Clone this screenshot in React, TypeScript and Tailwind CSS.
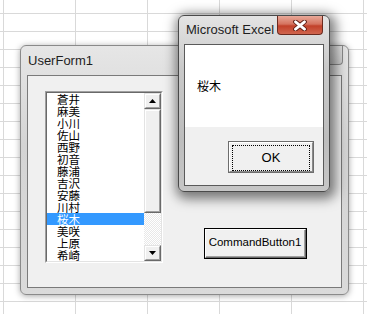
import React from 'react';

const names = ['蒼井', '麻美', '小川', '佐山', '西野', '初音', '藤浦', '吉沢', '安藤', '川村', '桜木', '美咲', '上原', '希崎'];

const sans = 'font-["Liberation_Sans",Arial,sans-serif]';
const cjk = 'font-["Noto_Sans_CJK_JP","Noto_Sans_CJK_SC",sans-serif]';

function Arrow({ down }: { down?: boolean }) {
  return (
    <svg width="7" height="4" viewBox="0 0 7 4">
      <polygon points={down ? '0,0 7,0 3.5,4' : '3.5,0 7,4 0,4'} fill="#000" />
    </svg>
  );
}

function ScrollBtn({ down }: { down?: boolean }) {
  return (
    <div className="h-[16px] border border-t-[#e3e3e3] border-l-[#e3e3e3] border-r-[#696969] border-b-[#696969]">
      <div className="h-full flex items-center justify-center bg-[#f0f0f0] border border-t-white border-l-white border-r-[#a0a0a0] border-b-[#a0a0a0]">
        <Arrow down={down} />
      </div>
    </div>
  );
}

function ListBox() {
  return (
    <div className="w-[118px] h-[172px] border border-t-[#a0a0a0] border-l-[#a0a0a0] border-r-white border-b-white">
      <div className="h-full flex bg-white border border-t-[#696969] border-l-[#696969] border-r-[#e3e3e3] border-b-[#e3e3e3]">
        <div className={`flex-1 flex flex-col ${cjk} text-[11.5px] leading-[12px] text-black`}>
          {names.map((n) => (
            <div
              key={n}
              className={`h-[12px] flex items-center pl-[10px] ${n === '桜木' ? 'bg-[#3399ff] text-white' : ''}`}
            >
              <span className="leading-[11px]">{n}</span>
            </div>
          ))}
        </div>
        <div className="w-[17px] flex flex-col">
          <ScrollBtn />
          <div className="h-[104px] border border-t-[#e3e3e3] border-l-[#e3e3e3] border-r-[#696969] border-b-[#696969]">
            <div className="h-full bg-[#f0f0f0] border border-t-white border-l-white border-r-[#a0a0a0] border-b-[#a0a0a0]" />
          </div>
          <div className="flex-1 bg-[repeating-conic-gradient(#ffffff_0_25%,#e8e8e8_0_50%)] bg-[length:2px_2px]" />
          <ScrollBtn down />
        </div>
      </div>
    </div>
  );
}

function CloseX() {
  return (
    <svg width="14" height="11" viewBox="0 0 14 11">
      <path d="M2.5 1.8 L11.5 9.2 M11.5 1.8 L2.5 9.2" stroke="#5a1a10" strokeWidth="4.6" strokeLinecap="round" />
      <path d="M2.5 1.8 L11.5 9.2 M11.5 1.8 L2.5 9.2" stroke="#ffffff" strokeWidth="2.8" strokeLinecap="round" />
    </svg>
  );
}

export default function App() {
  return (
    <div className="relative w-[367px] h-[314px] overflow-hidden bg-white bg-[linear-gradient(to_right,#d9d9d9_1px,transparent_1px),linear-gradient(to_bottom,#d9d9d9_1px,transparent_1px)] bg-[length:72px_18px] bg-[position:3px_13px]">
      {/* UserForm1 */}
      <div className="absolute left-[20px] top-[45px] w-[329px] h-[250px] flex flex-col rounded-[6px] border border-[#8a8a8a] bg-[linear-gradient(to_bottom,#e6e6e6,#d4d4d4_40%,#dadada)] shadow-[0_1px_6px_rgba(0,0,0,0.35)]">
        <div className={`h-[29px] pl-[7px] flex items-center ${sans} text-[13px] text-[#1e1e1e]`}>UserForm1</div>
        <div className="absolute right-[5px] top-0 w-[44px] h-[19px] rounded-b-[4px] border border-t-0 border-[#8a8a8a] bg-[linear-gradient(to_bottom,#e4e4e4,#cfcfcf)]" />
        <div className="flex-1 mx-[6px] mb-[6px] border border-[#7a7a7a] bg-[#f0f0f0] flex items-start pl-[17px] pt-[15px]">
          <ListBox />
          <div className="ml-[41px] mt-[137px] w-[103px] h-[31px] border border-black">
            <div className="h-full border border-t-white border-l-white border-r-[#696969] border-b-[#696969]">
              <div className={`h-full flex items-center justify-center bg-[#f0f0f0] border-r border-b border-[#a0a0a0] ${sans} text-[11.5px] text-black`}>
                CommandButton1
              </div>
            </div>
          </div>
        </div>
      </div>

      {/* MsgBox */}
      <div className="absolute left-[178px] top-[15px] w-[152px] h-[177px] flex flex-col rounded-[6px] border border-[#4a4a4a] bg-[linear-gradient(to_bottom,#e4e4e4,#c9c9c9_30%,#bdbdbd_70%,#c6c6c6)] shadow-[2px_3px_12px_4px_rgba(0,0,0,0.5)]">
        <div className={`h-[28px] pl-[7px] flex items-center ${sans} text-[13px] text-[#1e1e1e]`}>Microsoft Excel</div>
        <div className="absolute left-[98px] top-0 w-[46px] h-[19px] flex items-center justify-center rounded-b-[4px] border border-t-0 border-[#6b2a1f] bg-[linear-gradient(to_bottom,#e9a999,#d5735f_45%,#c2412a_55%,#d0664f)]">
          <CloseX />
        </div>
        <div className="flex-1 mx-[5px] mb-[5px] border border-[#5a5a5a] flex flex-col">
          <div className={`h-[82px] bg-white flex items-center pl-[12px] ${cjk} text-[12px] text-black`}>桜木</div>
          <div className="flex-1 bg-[#f0f0f0] pl-[43px] pt-[14px]">
            <div className="w-[86px] h-[32px] border border-[#6d6d6d]">
              <div className="h-full p-[1px] border border-t-white border-l-white border-r-[#8a8a8a] border-b-[#8a8a8a] bg-[#f0f0f0]">
                <div className="h-full m-[1px] border border-dotted border-black flex items-center justify-center">
                  <span className={`${sans} text-[13px] text-black`}>OK</span>
                </div>
              </div>
            </div>
          </div>
        </div>
      </div>
    </div>
  );
}
